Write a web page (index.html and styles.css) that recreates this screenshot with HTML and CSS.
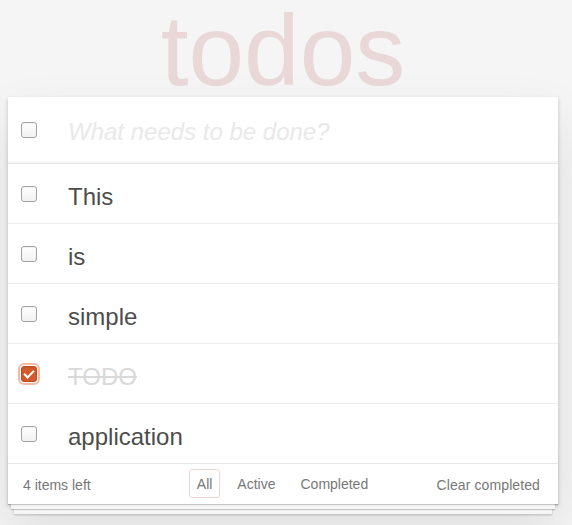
FILE: index.html
```html
<!DOCTYPE html>
<html lang="en">
<head>
<meta charset="utf-8">
<title>todos</title>
<link rel="stylesheet" href="styles.css">
</head>
<body>
<section class="todoapp">
  <header class="header">
    <h1 class="title">todos</h1>
  </header>
  <div class="card">
    <div class="new-row">
      <input class="check" type="checkbox" aria-label="Toggle all">
      <input class="new-todo" type="text" placeholder="What needs to be done?">
    </div>
    <ul class="todo-list">
      <li class="todo"><input class="check" type="checkbox"><span class="label">This</span></li>
      <li class="todo"><input class="check" type="checkbox"><span class="label">is</span></li>
      <li class="todo"><input class="check" type="checkbox"><span class="label">simple</span></li>
      <li class="todo completed"><input class="check focused" type="checkbox" checked><span class="label">TODO</span></li>
      <li class="todo"><input class="check" type="checkbox"><span class="label">application</span></li>
    </ul>
    <footer class="footer">
      <span class="count">4 items left</span>
      <ul class="filters">
        <li><a class="filter selected" href="#/">All</a></li>
        <li><a class="filter" href="#/active">Active</a></li>
        <li><a class="filter" href="#/completed">Completed</a></li>
      </ul>
      <button class="clear">Clear completed</button>
    </footer>
  </div>
</section>
</body>
</html>
```

FILE: styles.css
```css
html {
  height: 100%;
  overflow: hidden;
  background: #f5f5f5;
}

body {
  margin: 0;
  padding: 0;
  min-height: 100%;
  background: #f5f5f5;
  font-family: "Liberation Sans", Arial, Helvetica, sans-serif;
  font-size: 14px;
  color: #4d4d4d;
}

.todoapp {
  width: 550px;
  margin: 0 0 0 8px;
  padding-bottom: 20px;
}

.header {
  height: 97px;
}

.title {
  margin: 0;
  height: 97px;
  font-size: 100px;
  font-weight: 400;
  line-height: 100px;
  text-align: center;
  color: rgba(175, 47, 47, 0.15);
}

.card {
  position: relative;
  background: #fff;
  box-shadow: 0 2px 4px rgba(0, 0, 0, 0.2), 0 25px 50px rgba(0, 0, 0, 0.1);
}

.new-row {
  display: flex;
  align-items: center;
  height: 66px;
  border-bottom: 1px solid #e6e6e6;
  box-shadow: inset 0 -2px 1px rgba(0, 0, 0, 0.03);
}

.check {
  appearance: none;
  -webkit-appearance: none;
  position: relative;
  flex: none;
  width: 16px;
  height: 16px;
  margin: 0 31px 0 13px;
  border: 1px solid #a3a3a3;
  border-radius: 3px;
  background: linear-gradient(#ffffff, #f1f1f1);
  box-shadow: inset 0 1px 1px rgba(0, 0, 0, 0.06);
}

.check:checked {
  background: #d25a2c;
  border-color: #b84b22;
}

.check:checked::after {
  content: "";
  position: absolute;
  left: 4px;
  top: 1px;
  width: 4px;
  height: 8px;
  border-right: 2px solid #fff;
  border-bottom: 2px solid #fff;
  transform: rotate(45deg);
}

.check.focused {
  outline: 2px solid rgba(236, 130, 90, 0.55);
  outline-offset: 1px;
}

.new-todo {
  flex: 1;
  height: 66px;
  padding: 4px 16px 0 0;
  border: 0;
  outline: none;
  background: transparent;
  font-family: inherit;
  font-size: 24px;
  color: #4d4d4d;
}

.new-todo::placeholder {
  font-style: italic;
  color: #e9e9e9;
}

.todo-list {
  list-style: none;
  margin: 0;
  padding: 0;
}

.todo {
  display: flex;
  align-items: center;
  height: 59px;
  border-bottom: 1px solid #ededed;
}

.todo:last-child {
  border-bottom: 0;
}

.label {
  padding-top: 7px;
  font-size: 24px;
  line-height: 1.2;
  color: #4d4d4d;
}

.completed .label {
  color: #d9d9d9;
  text-decoration: line-through;
}

.footer {
  position: relative;
  display: grid;
  grid-template-columns: 1fr auto 1fr;
  align-items: start;
  height: 20px;
  padding: 10px 15px;
  border-top: 1px solid #e6e6e6;
  color: #777;
  line-height: 20px;
}

.footer::before {
  content: "";
  position: absolute;
  right: 0;
  bottom: 0;
  left: 0;
  height: 50px;
  overflow: hidden;
  box-shadow: 0 1px 1px rgba(0, 0, 0, 0.2),
              0 8px 0 -3px #f6f6f6,
              0 9px 1px -3px rgba(0, 0, 0, 0.2),
              0 16px 0 -6px #f6f6f6,
              0 17px 2px -6px rgba(0, 0, 0, 0.2);
  pointer-events: none;
}

.count {
  position: relative;
  padding-top: 1px;
}

.filters {
  position: relative;
  display: flex;
  gap: 9px;
  list-style: none;
  margin: -5px 0 0 -1px;
  padding: 0;
}

.filter {
  display: block;
  padding: 4px 7px 3px;
  border: 1px solid transparent;
  border-radius: 3px;
  color: inherit;
  text-decoration: none;
}

.filter.selected {
  border-color: rgba(175, 47, 47, 0.2);
}

.clear {
  position: relative;
  justify-self: end;
  margin: 1px 3px 0 0;
  padding: 0;
  border: 0;
  background: none;
  font-family: inherit;
  font-size: 14px;
  line-height: 20px;
  letter-spacing: 0.1px;
  color: #777;
}
```
